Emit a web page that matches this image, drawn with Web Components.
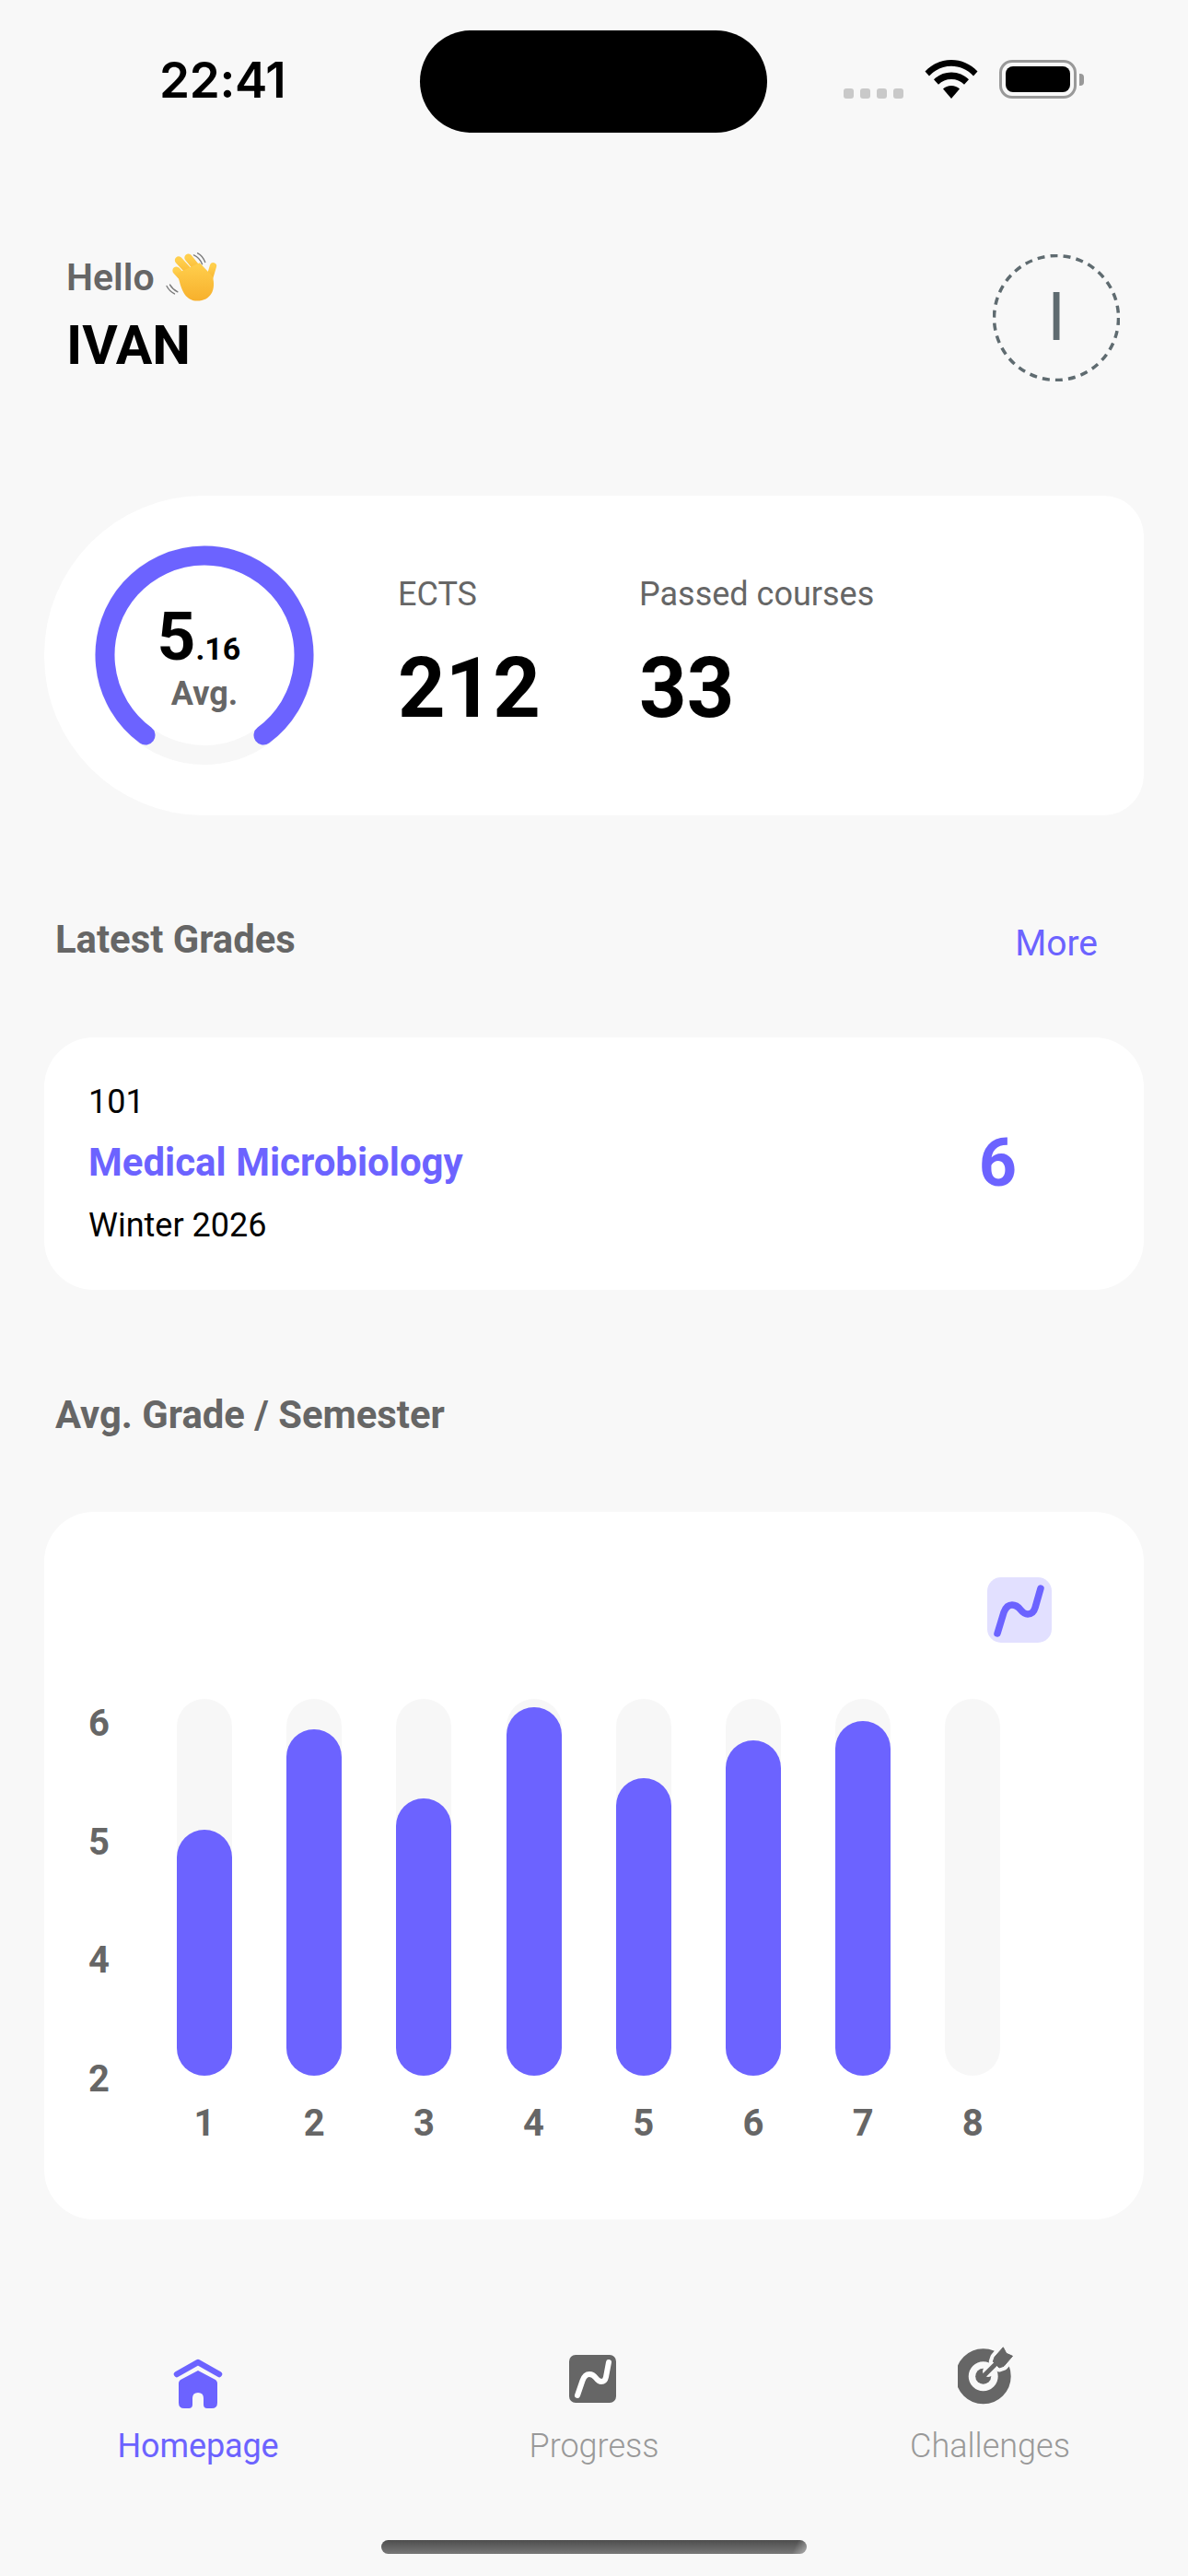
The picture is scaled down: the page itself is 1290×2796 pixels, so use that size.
<!DOCTYPE html>
<html lang="en">
<head>
<meta charset="utf-8">
<title>Homepage</title>
<style>
  html, body { margin: 0; padding: 0; background: #f8f8f8; }
  body { font-family: Roboto, "Liberation Sans", sans-serif; color: #000; }
  app-screen { width: 1290px; height: 2796px; }
</style>
</head>
<body>
<app-screen>
  <app-status></app-status>
  <app-greeting name="IVAN" initial="I"></app-greeting>
  <app-summary></app-summary>
  <section-head style="margin-top:105px" link="More">Latest Grades</section-head>
  <grade-card style="margin-top:76px" code="101" course="Medical Microbiology" term="Winter 2026" grade="6"></grade-card>
  <section-head style="margin-top:106px">Avg. Grade / Semester</section-head>
  <semester-chart style="margin-top:75px"></semester-chart>
  <tab-bar></tab-bar>
  <home-indicator></home-indicator>
</app-screen>

<script>
function define(name, css, html) {
  customElements.define(name, class extends HTMLElement {
    constructor() {
      super();
      const root = this.attachShadow({ mode: 'open' });
      const attr = (k) => this.getAttribute(k) || '';
      root.innerHTML = '<style>' + css + '</style>' + (typeof html === 'function' ? html(attr) : html);
    }
  });
}

define('app-screen', ':host{display:flex;flex-direction:column;box-sizing:border-box;overflow:hidden;background:#f8f8f8}', '<slot></slot>');

define('app-status', `
  :host{display:flex;height:150px;box-sizing:border-box;flex:none}
  .time{font:600 53px/1 Inter,Roboto,sans-serif;letter-spacing:-.3px;margin:61px 0 0 173px;width:283px;color:#000}
  .island{width:377px;height:111px;margin-top:33px;border-radius:56px;background:#000;flex:none}
  .right{display:flex;align-items:flex-end;height:42px;margin:65px 0 0 83px}
  .dots{display:flex;gap:7px;width:88px}
  .dots i{display:block;width:11px;height:11px;border-radius:3px;background:#c9c9c9}
  .wifi{display:block;width:58px;height:42px}
  .battery{display:flex;align-items:center;margin-left:23px;height:42px}
  .shell{box-sizing:border-box;width:84px;height:42px;border:3px solid #999;border-radius:14px;padding:4px;background:#f8f8f8}
  .fill{height:100%;border-radius:8px;background:#000}
  .nub{width:5px;height:13px;margin-left:3px;border-radius:0 4px 4px 0;background:#999}
`, `
  <div class="time">22:41</div>
  <div class="island"></div>
  <div class="right">
    <div class="dots"><i></i><i></i><i></i><i></i></div>
    <svg class="wifi" viewBox="0 0 58 42"><path fill="#000" d="M29 0C18 0 8.500 4.300 .5 12.500L5 17.500C11.500 10.500 20 6.800 29 6.800S46.500 10.500 53 17.500L57.500 12.500C49.500 4.300 40 0 29 0Z"/><path fill="#000" d="M29 13.500C21.500 13.500 15 16.300 10 21.300L15 26.800C18.800 23 23.500 21 29 21S39.200 23 43 26.800L48 21.300C43 16.300 36.500 13.500 29 13.500Z"/><path fill="#000" d="M29 28C25.500 28 22.300 29.300 20 31.500L29 42 38 31.500C35.700 29.300 32.500 28 29 28Z"/></svg>
    <div class="battery"><div class="shell"><div class="fill"></div></div><div class="nub"></div></div>
  </div>
`);

define('app-greeting', `
  :host{display:flex;justify-content:space-between;box-sizing:border-box;height:139px;margin-top:125px;padding:0 74px 0 72px;flex:none}
  .hello{display:flex;align-items:center;height:52px;font:600 41px/52px Roboto,sans-serif;color:#666}
  .hello svg{display:block;width:60px;height:56px;margin-left:10px;margin-top:-2px}
  .name{font:700 59px/70px Roboto,sans-serif;color:#000;margin-top:13px}
  .avatar{display:grid;width:138px;height:138px;margin-top:1px;font:400 72px/1 Roboto,sans-serif;color:#5f6b70}
  .avatar>*{grid-area:1/1}
  .avatar svg{display:block;width:138px;height:138px}
  .avatar span{align-self:center;justify-self:center}
`, (a) => `
  <div>
    <div class="hello">Hello
      <svg viewBox="360 70 170 160" aria-hidden="true">
        <defs><linearGradient id="h" x1="0" y1="0" x2="0" y2="1"><stop offset="0" stop-color="#ffcf4d"/><stop offset="1" stop-color="#f7b02c"/></linearGradient></defs>
        <g fill="none" stroke="#7a7a7a" stroke-width="4" stroke-linecap="round"><path d="M452 84Q470 92 478 112"/><path d="M464 78Q480 86 487 106"/><path d="M368 180Q376 196 392 204"/><path d="M378 176Q386 190 402 198"/></g>
        <g fill="none" stroke="url(#h)" stroke-linecap="round" stroke-width="24">
          <path d="M398 132L440 178"/><path d="M405 100L460 160"/><path d="M435 92L482 150"/><path d="M512 118L498 165" stroke-width="21"/>
        </g>
        <path fill="url(#h)" d="M402 140L470 108 510 150C522 190 505 226 462 226 430 226 412 200 402 140Z"/>
      </svg>
    </div>
    <div class="name">${a('name')}</div>
  </div>
  <div class="avatar">
    <svg viewBox="0 0 138 138"><circle cx="69" cy="69" r="67.500" fill="none" stroke="#5f6b70" stroke-width="3.500" stroke-dasharray="8 6.140"/></svg>
    <span>${a('initial')}</span>
  </div>
`);

define('app-summary', `
  :host{display:flex;box-sizing:border-box;width:1194px;height:347px;margin:124px 0 0 48px;padding:54px 0 0 55px;background:#fff;border-radius:173px 44px 44px 173px;flex:none}
  .ring{display:grid;width:238px;height:238px;flex:none}
  .ring>*{grid-area:1/1}
  .ring svg{display:block;width:238px;height:238px}
  .val{display:flex;flex-direction:column;align-items:center;padding-top:64px;box-sizing:border-box}
  .num{font:700 73px/70px Roboto,sans-serif;color:#000;margin-left:-12px;white-space:nowrap}
  .num small{font-size:34px}
  .avg{font:700 36px/40px Roboto,sans-serif;color:#666;margin-top:-6px}
  .stats{display:flex;margin-left:91px}
  .stat{width:262px;padding-top:33px}
  .stat span{display:block;font:400 36px/40px Roboto,sans-serif;color:#666;white-space:nowrap}
  .stat b{display:block;font:700 90px/100px Roboto,sans-serif;color:#000;margin-top:33px}
`, `
  <div class="ring">
    <svg viewBox="0 0 238 238"><circle cx="119" cy="119" r="108.500" fill="none" stroke="#f7f7f7" stroke-width="21"/><path d="M55 206A108 108 0 1 1 183 206" fill="none" stroke="#6c63ff" stroke-width="21" stroke-linecap="round"/></svg>
    <div class="val"><div class="num">5<small>.16</small></div><div class="avg">Avg.</div></div>
  </div>
  <div class="stats">
    <div class="stat"><span>ECTS</span><b>212</b></div>
    <div class="stat"><span>Passed courses</span><b>33</b></div>
  </div>
`);

define('section-head', `
  :host{display:flex;justify-content:space-between;align-items:center;box-sizing:border-box;height:60px;padding:0 98px 0 60px;flex:none}
  .t{font:700 41.800px/60px Roboto,sans-serif;color:#666}
  .m{font:400 39px/60px Roboto,sans-serif;color:#6c63ff;margin-top:7px}
`, (a) => `<div class="t"><slot></slot></div>${a('link') ? `<div class="m">${a('link')}</div>` : ''}`);

define('grade-card', `
  :host{display:flex;justify-content:space-between;align-items:center;box-sizing:border-box;width:1194px;height:274px;margin-left:48px;padding:0 138px 0 48px;background:#fff;border-radius:54px;flex:none}
  .code,.term{font:400 36px/44px Roboto,sans-serif;color:#000}
  .course{font:700 42px/50px Roboto,sans-serif;color:#6c63ff;margin:19px 0 21px}
  .grade{font:700 72px/1 Roboto,sans-serif;color:#6c63ff}
`, (a) => `
  <div><div class="code">${a('code')}</div><div class="course">${a('course')}</div><div class="term">${a('term')}</div></div>
  <div class="grade">${a('grade')}</div>
`);

define('semester-chart', `
  :host{display:flex;flex-direction:column;box-sizing:border-box;width:1194px;height:768px;margin-left:48px;padding:71px 0 0 48px;background:#fff;border-radius:54px;flex:none}
  .tools{display:flex;justify-content:flex-end;padding-right:100px;height:71px}
  .tools svg{display:block;width:70px;height:71px}
  .plot{display:flex;margin-top:61px}
  .ys{display:flex;flex-direction:column;justify-content:space-between;width:96px;height:440px;font:700 40px/54px Roboto,sans-serif;color:#666}
  .cols{display:flex;gap:59.200px}
  .col{display:flex;flex-direction:column;align-items:center;width:60px}
  .track{display:flex;flex-direction:column;justify-content:flex-end;width:60px;height:409px;border-radius:30px;background:#f7f7f7}
  .fill{border-radius:30px;background:#6c63ff}
  .x{font:700 40px/46px Roboto,sans-serif;color:#666;margin-top:29px}
`, () => `
  <div class="tools"><svg viewBox="0 0 70 71"><rect width="70" height="71" rx="15" fill="#e2e0ff"/><path d="M11 61L18 38Q21 30 27 30Q32 30 36 35Q40 40 44 40Q50 40 52 33L58 12" fill="none" stroke="#6c63ff" stroke-width="7.500" stroke-linecap="round" stroke-linejoin="round"/></svg></div>
  <div class="plot">
    <div class="ys"><span>6</span><span>5</span><span>4</span><span>2</span></div>
    <div class="cols">
      ${[267, 376, 301, 400, 323, 364, 385, 0].map((h, i) => `<div class="col"><div class="track"><div class="fill" style="height:${h}px"></div></div><div class="x">${i + 1}</div></div>`).join('')}
    </div>
  </div>
`);

define('tab-bar', `
  :host{display:grid;grid-template-columns:repeat(3,430px);margin-top:138px;flex:none}
  .tab{display:flex;flex-direction:column;align-items:center;font:300 36px/46px Roboto,sans-serif;color:#999}
  .tab svg{display:block;width:70px;height:70px;margin-bottom:15px}
  .on{color:#6c63ff;font-weight:400;letter-spacing:-.1px}
`, `
  <div class="tab on">
    <svg viewBox="0 0 70 70"><path d="M12 30L35 17L58 30" fill="none" stroke="#6c63ff" stroke-width="6.500" stroke-linecap="round" stroke-linejoin="round"/><path fill="#6c63ff" d="M35 26L53 35.500Q56 37 56 40V61Q56 67 50 67H45Q41 67 41 63V56Q41 50 35 50Q29 50 29 56V63Q29 67 25 67H20Q14 67 14 61V40Q14 37 17 35.500Z"/></svg>
    Homepage
  </div>
  <div class="tab">
    <svg viewBox="0 0 70 70"><rect x="8" y="9" width="51" height="52" rx="7" fill="#666"/><path d="M17 53L22.500 37Q25 30 30 30Q34 30 37 34Q40 38 43 38Q47 38 48 33L51 17" fill="none" stroke="#fff" stroke-width="6" stroke-linecap="round" stroke-linejoin="round"/></svg>
    Progress
  </div>
  <div class="tab">
    <svg viewBox="0 0 70 70"><circle cx="27.700" cy="32.300" r="23" fill="none" stroke="#666" stroke-width="14"/><circle cx="27.700" cy="32.300" r="8.500" fill="#666"/><path d="M33 27L48 12" stroke="#f8f8f8" stroke-width="12" stroke-linecap="round"/><path fill="#f8f8f8" stroke="#f8f8f8" stroke-width="9" stroke-linejoin="round" d="M38.300 16.300L40 11.300L49.300 .3L52.700 7.300L60 10.300L50 21.300L45 23Z"/><path d="M28 32L46 14" stroke="#666" stroke-width="5"/><path fill="#666" stroke="#666" stroke-width="1" stroke-linejoin="round" d="M38.300 16.300L40 11.300L49.300 .8L52.700 7.300L59.500 10.300L50 21.300L45 23Z"/></svg>
    Challenges
  </div>
`);

define('home-indicator', `
  :host{display:block;width:462px;height:15px;margin:79px 0 0 414px;border-radius:8px;flex:none;
    background:linear-gradient(115deg,transparent 96.500%,rgba(248,248,248,.45) 100%),linear-gradient(180deg,#4d4d4d,#787878)}
`, '');
</script>
</body>
</html>
